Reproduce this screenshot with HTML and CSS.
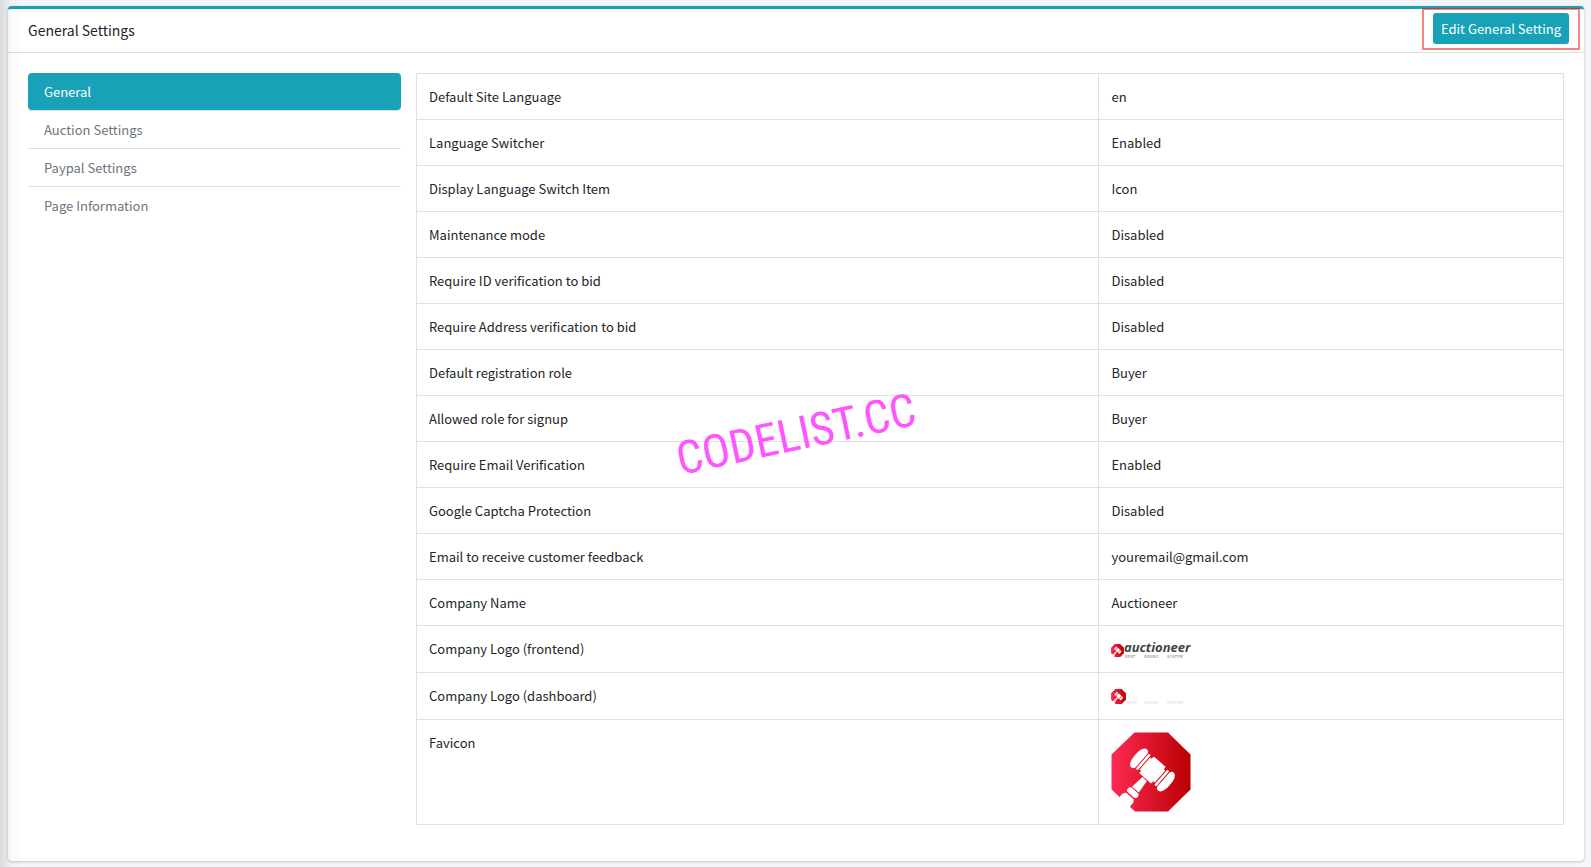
FILE: index.html
```html
<!DOCTYPE html>
<html lang="en">
<head>
<meta charset="utf-8">
<title>General Settings</title>
<link rel="stylesheet" href="styles.css">
</head>
<body>
<svg class="defs" aria-hidden="true">
  <defs>
    <linearGradient id="red" x1="0" x2="1" y1="0" y2="0">
      <stop offset="0" stop-color="#ff2a55"/>
      <stop offset="1" stop-color="#b80000"/>
    </linearGradient>
    <symbol id="gavel" viewBox="0 0 80 80">
      <path fill="url(#red)" d="M23.500 .5H57L79.500 22.500V57.500L57 79.500H24L.5 57.500V22.500Z"/>
      <g transform="translate(41.500 38) rotate(41)" fill="#fff">
        <path d="M-8-10Q-8-11-7-11H7Q8-11 8-10V-8H10V8H8V10Q8 11 7 11H-7Q-8 11-8 10V8H-10V-8H-8Z"/>
        <rect x="-13.500" y="-10" width="2.500" height="20" rx="1"/>
        <rect x="11" y="-10" width="2.500" height="20" rx="1"/>
        <path d="M-14.500-9Q-15-12-18-12Q-23-11-23 0T-18 12Q-15 12-14.500 9Z"/>
        <path d="M14.500-9Q15-12 18-12Q23-11 23 0T18 12Q15 12 14.500 9Z"/>
        <path d="M-3 12H3L4.500 26H-4.500Z"/>
        <rect x="-6.500" y="27" width="13" height="6" rx="3"/>
        <path d="M-5 34.500H5Q8 37 7 41L8 58H-8L-7 41Q-8 37-5 34.500Z"/>
      </g>
    </symbol>
  </defs>
</svg>
<main class="card">
  <header class="card-header">
    <h1 class="card-title">General Settings</h1>
    <div class="highlight"><button class="btn" type="button">Edit General Setting</button></div>
  </header>
  <div class="card-body">
    <nav class="tabs" aria-label="Settings">
      <ul>
        <li><a class="active" href="#general">General</a></li>
        <li><a href="#auction">Auction Settings</a></li>
        <li><a href="#paypal">Paypal Settings</a></li>
        <li><a href="#page">Page Information</a></li>
      </ul>
    </nav>
    <table class="settings">
      <tbody>
        <tr><td>Default Site Language</td><td>en</td></tr>
        <tr><td>Language Switcher</td><td>Enabled</td></tr>
        <tr><td>Display Language Switch Item</td><td>Icon</td></tr>
        <tr><td>Maintenance mode</td><td>Disabled</td></tr>
        <tr><td>Require ID verification to bid</td><td>Disabled</td></tr>
        <tr><td>Require Address verification to bid</td><td>Disabled</td></tr>
        <tr><td>Default registration role</td><td>Buyer</td></tr>
        <tr><td>Allowed role for signup</td><td>Buyer</td></tr>
        <tr><td>Require Email Verification</td><td>Enabled</td></tr>
        <tr><td>Google Captcha Protection</td><td>Disabled</td></tr>
        <tr><td>Email to receive customer feedback</td><td>youremail@gmail.com</td></tr>
        <tr><td>Company Name</td><td>Auctioneer</td></tr>
        <tr><td>Company Logo (frontend)</td><td>
          <svg class="logo" viewBox="0 0 80 22" role="img" aria-label="Auctioneer logo">
            <use href="#gavel" x="0" y="6" width="13" height="13"/>
            <text class="logo-name" x="13" y="14">auctioneer</text>
            <g class="logo-tag"><text x="14" y="20">BEST</text><text x="33" y="20">BIDING</text><text x="56" y="20">SYSTEM</text></g>
          </svg></td></tr>
        <tr><td>Company Logo (dashboard)</td><td>
          <svg class="logo" viewBox="0 0 80 22" role="img" aria-label="Auctioneer dashboard logo">
            <use href="#gavel" x="0" y="4" width="15" height="15"/>
            <g class="logo-tag faint"><text x="16" y="19">BEST</text><text x="33" y="19">BIDING</text><text x="56" y="19">SYSTEM</text></g>
          </svg></td></tr>
        <tr><td>Favicon</td><td><svg class="favicon" role="img" aria-label="Favicon"><use href="#gavel"/></svg></td></tr>
      </tbody>
    </table>
  </div>
</main>
<div class="watermark">CODELIST.CC</div>
</body>
</html>
```
FILE: styles.css
```css
* { box-sizing: border-box; }
body {
  margin: 0;
  padding: 6px 7px 6px 8px;
  background: #f4f6f9;
  color: #212529;
  font: 13px/21px "Noto Sans CJK SC", "Noto Sans", sans-serif;
}
/* shadow cast by the sidebar at the left edge */
body::before {
  content: "";
  position: fixed;
  z-index: 1;
  inset: 0 auto 0 0;
  width: 24px;
  background: linear-gradient(to right, rgba(0,0,0,.11), rgba(0,0,0,.02) 50%, transparent);
  pointer-events: none;
}
.defs { position: absolute; width: 0; height: 0; }
.card {
  background: #fff;
  border-top: 3px solid #17a2b8;
  border-radius: 4px;
  box-shadow: 0 0 1px rgba(0,0,0,.13), 0 1px 3px rgba(0,0,0,.2);
}
.card-header {
  display: flex;
  align-items: flex-start;
  justify-content: space-between;
  padding: 4px 15px 8px 20px;
  border-bottom: 1px solid #dfdfdf;
}
.card-title { margin: 0; padding-top: 7px; font-size: 14px; font-weight: 400; }
.highlight { position: relative; }
.highlight::after {
  content: "";
  position: absolute;
  inset: -5px -11px -6px;
  border: 2px solid rgba(255,0,0,.5);
  pointer-events: none;
}
.btn {
  display: block;
  padding: 5px 8px;
  border: 0;
  border-radius: 3px;
  background: #17a2b8;
  color: #fff;
  font: inherit;
}
.card-body {
  display: grid;
  grid-template-columns: calc(25% - 11px) 1fr;
  gap: 15px;
  align-items: start;
  padding: 20px 20px 36px;
}
.tabs ul { margin: 0; padding: 0; list-style: none; }
.tabs li + li { border-top: 1px solid #dfdfdf; }
.tabs a {
  display: block;
  padding: 8px 16px;
  border-radius: 4px;
  color: #6c757d;
  text-decoration: none;
}
.tabs a.active { background: #17a2b8; color: #fff; }
.settings { width: 100%; border-collapse: collapse; }
.settings td {
  padding: 12px;
  border: 1px solid #dee2e6;
  vertical-align: top;
}
.settings td:first-child { width: 59.5%; }
.logo { display: block; width: 80px; height: 22px; }
.logo-name { font: italic 700 13px "Open Sans", sans-serif; fill: #444; }
.logo-tag { font: italic 4px "DejaVu Sans", sans-serif; fill: #888; }
.logo-tag.faint { fill: #ddd; }
.favicon { display: block; width: 80px; height: 80px; }
.watermark {
  position: absolute;
  top: 50%;
  left: 50%;
  transform: translate(-50%, -50%) rotate(-12deg);
  color: #ff55ff;
  font: 46px/1 "Roboto Condensed", Roboto, "Liberation Sans", sans-serif;
}
```
